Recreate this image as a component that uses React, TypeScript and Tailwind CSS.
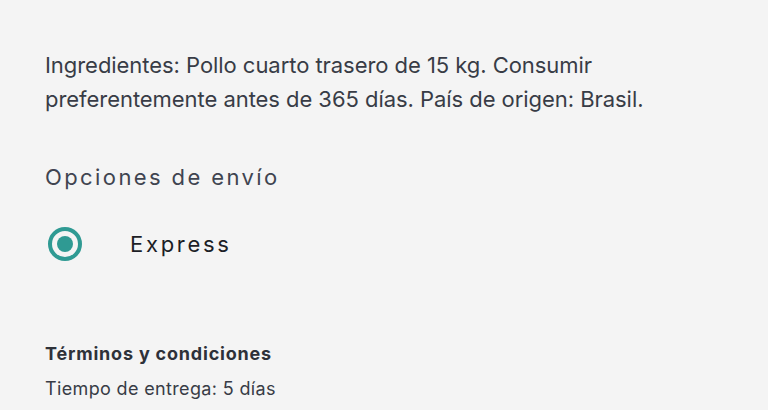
import React from 'react';

function Radio({ checked }: { checked: boolean }) {
  return (
    <span className="w-[34px] h-[34px] rounded-full border-[4px] border-[#2f9a93] flex items-center justify-center shrink-0">
      {checked && <span className="w-[16px] h-[16px] rounded-full bg-[#2f9a93]" />}
    </span>
  );
}

export default function App() {
  return (
    <div className="min-h-screen w-full bg-[#f4f4f4] font-['Inter','Liberation_Sans',sans-serif] text-[#383c46] overflow-hidden">
      <div className="px-[45px] pt-[48px]">
        {/* Description */}
        <p className="text-[22px] leading-[34px] tracking-[-0.05px] max-w-[650px]">
          Ingredientes: Pollo cuarto trasero de 15 kg. Consumir preferentemente antes de 365 días. País de origen: Brasil.
        </p>

        {/* Shipping */}
        <h2 className="mt-[45px] text-[22px] leading-[32px] tracking-[2.4px] text-[#3f4450]">Opciones de envío</h2>
        <label className="mt-[34px] flex items-center gap-[48px] h-[34px] ml-[3px]">
          <Radio checked />
          <span className="text-[22px] tracking-[2.7px] text-[#1c1e26]">Express</span>
        </label>

        {/* Terms */}
        <div className="mt-[79px]">
          <h3 className="text-[18px] leading-[28px] font-bold tracking-[0.8px] text-[#2e3139]">Términos y condiciones</h3>
          <p className="mt-[7px] text-[18px] leading-[28px] tracking-[0.35px] text-[#383c46]">Tiempo de entrega: 5 días</p>
        </div>
      </div>
    </div>
  );
}
